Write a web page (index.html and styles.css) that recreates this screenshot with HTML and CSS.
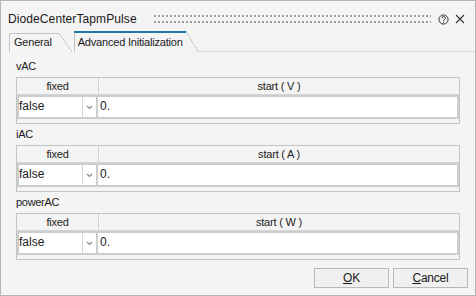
FILE: index.html
```html
<!DOCTYPE html>
<html lang="en">
<head>
    <meta charset="UTF-8">
    <title>DiodeCenterTapmPulse</title>
    <link rel="stylesheet" href="styles.css">
</head>
<body>
    <div class="dialog">
        <div class="titlebar">
            <span class="title">DiodeCenterTapmPulse</span>
            <div class="grip"><span></span><span></span></div>
            <svg class="help" width="11" height="11" viewBox="0 0 11 11">
                <circle cx="5.5" cy="5.5" r="4.6" fill="none" stroke="#333" stroke-width="1"/>
                <path d="M3.9 4.3 A1.7 1.7 0 1 1 6.3 5.8 Q5.5 6.2 5.5 7" fill="none" stroke="#333" stroke-width="1"/>
                <rect x="5" y="7.8" width="1" height="1" fill="#333"/>
            </svg>
            <svg class="close" width="10" height="10" viewBox="0 0 10 10">
                <path d="M1 1 L9 9 M9 1 L1 9" stroke="#333" stroke-width="1.1"/>
            </svg>
        </div>
        <div class="tabs">
            <div class="tab">General</div>
            <div class="tab active">Advanced Initialization</div>
            <div class="tab-rest"></div>
        </div>
        <div class="pane">
            <div class="param">
                <div class="param-name">vAC</div>
                <div class="param-table">
                    <div class="head">
                        <div class="head-fixed">fixed</div>
                        <div class="head-start">start ( V )</div>
                    </div>
                    <div class="row">
                        <div class="cell-fixed">false</div>
                        <div class="cell-arrow"><svg width="7" height="5" viewBox="0 0 7 5"><path d="M1 1 L3.5 3.5 L6 1" fill="none" stroke="#8a8a8a" stroke-width="1.2"/></svg></div>
                        <div class="cell-start">0.</div>
                    </div>
                </div>
            </div>
            <div class="param">
                <div class="param-name">iAC</div>
                <div class="param-table">
                    <div class="head">
                        <div class="head-fixed">fixed</div>
                        <div class="head-start">start ( A )</div>
                    </div>
                    <div class="row">
                        <div class="cell-fixed">false</div>
                        <div class="cell-arrow"><svg width="7" height="5" viewBox="0 0 7 5"><path d="M1 1 L3.5 3.5 L6 1" fill="none" stroke="#8a8a8a" stroke-width="1.2"/></svg></div>
                        <div class="cell-start">0.</div>
                    </div>
                </div>
            </div>
            <div class="param">
                <div class="param-name">powerAC</div>
                <div class="param-table">
                    <div class="head">
                        <div class="head-fixed">fixed</div>
                        <div class="head-start">start ( W )</div>
                    </div>
                    <div class="row">
                        <div class="cell-fixed">false</div>
                        <div class="cell-arrow"><svg width="7" height="5" viewBox="0 0 7 5"><path d="M1 1 L3.5 3.5 L6 1" fill="none" stroke="#8a8a8a" stroke-width="1.2"/></svg></div>
                        <div class="cell-start">0.</div>
                    </div>
                </div>
            </div>
        </div>
        <div class="buttons">
            <button class="btn"><u>O</u>K</button>
            <button class="btn"><u>C</u>ancel</button>
        </div>
    </div>
</body>
</html>
```

FILE: styles.css
```css
* {
    box-sizing: border-box;
    margin: 0;
    padding: 0;
}
body {
    font-family: "Liberation Sans", Arial, sans-serif;
    color: #1a1a1a;
    background: #f4f4f4;
}
.dialog {
    width: 476px;
    height: 296px;
    border: 1px solid #b4b4b4;
    background: #f4f4f4;
    display: flex;
    flex-direction: column;
}
.titlebar {
    height: 30px;
    display: flex;
    align-items: center;
    padding: 6px 10px 0 7px;
}
.title {
    font-size: 12px;
    line-height: 14px;
    letter-spacing: 0.1px;
}
.grip {
    flex: 1;
    margin: 0 7px 0 17px;
    display: flex;
    flex-direction: column;
    gap: 4px;
}
.grip span {
    height: 2px;
    background: repeating-linear-gradient(90deg, #9c9c9c 0 2px, transparent 2px 4px);
}
.help {
    margin-right: 6px;
}
.tabs {
    height: 21px;
    display: flex;
    align-items: flex-end;
    padding-left: 8px;
}
.tab {
    position: relative;
    height: 19px;
    font-size: 11px;
    letter-spacing: -0.2px;
    line-height: 18px;
    padding: 0 20px 0 4px;
    border-left: 1px solid #c4c4c4;
}
.tab::before {
    content: "";
    position: absolute;
    left: 0;
    top: 0;
    right: 13px;
    height: 1px;
    background: #c4c4c4;
}
.tab::after {
    content: "";
    position: absolute;
    right: 0;
    top: 0;
    bottom: 0;
    width: 13px;
    background: linear-gradient(to top right, transparent calc(50% - 0.6px), #b8b8b8 50%, transparent calc(50% + 0.6px));
}
.tab.active {
    height: 21px;
    margin-left: 2px;
    padding: 2px 15px 0 3px;
}
.tab.active::before {
    height: 2px;
    right: 12px;
    left: -1px;
    background: #1b7aa8;
}
.tab.active::after {
    width: 12px;
}
.tab-rest {
    flex: 1;
    height: 21px;
    border-bottom: 1px solid #d6d6d6;
}
.pane {
    padding: 7px 15px 0 15px;
}
.param {
    margin-bottom: 3px;
}
.param-name {
    font-size: 11px;
    line-height: 14px;
    letter-spacing: -0.3px;
    margin-bottom: 4px;
}
.param-table {
    border: 1px solid #c4c4c4;
    padding-bottom: 4px;
}
.head {
    display: grid;
    grid-template-columns: 82px 1fr;
    height: 17px;
    border-bottom: 1px solid #d4d4d4;
    font-size: 11px;
    letter-spacing: -0.2px;
    color: #222;
    line-height: 16px;
    text-align: center;
}
.head-fixed {
    border-right: 1px solid #d4d4d4;
}
.row {
    display: grid;
    grid-template-columns: 64px 15px 1fr;
    height: 24px;
    border: 2px solid #cdcdcd;
    background: #fff;
    font-size: 12px;
    line-height: 19px;
}
.cell-fixed {
    padding-left: 0;
    border-right: 1px solid #d8d8d8;
}
.cell-arrow {
    display: flex;
    align-items: center;
    justify-content: center;
    border-right: 2px solid #cdcdcd;
}
.cell-start {
    padding-left: 2px;
}
.buttons {
    display: flex;
    justify-content: flex-end;
    gap: 4px;
    padding: 5px 7px 0 0;
}
.btn {
    width: 75px;
    height: 20px;
    font-family: "Liberation Sans", Arial, sans-serif;
    font-size: 12px;
    letter-spacing: -0.2px;
    color: #1a1a1a;
    background: #f0f0f0;
    border: 1px solid #b9b9b9;
}
```
